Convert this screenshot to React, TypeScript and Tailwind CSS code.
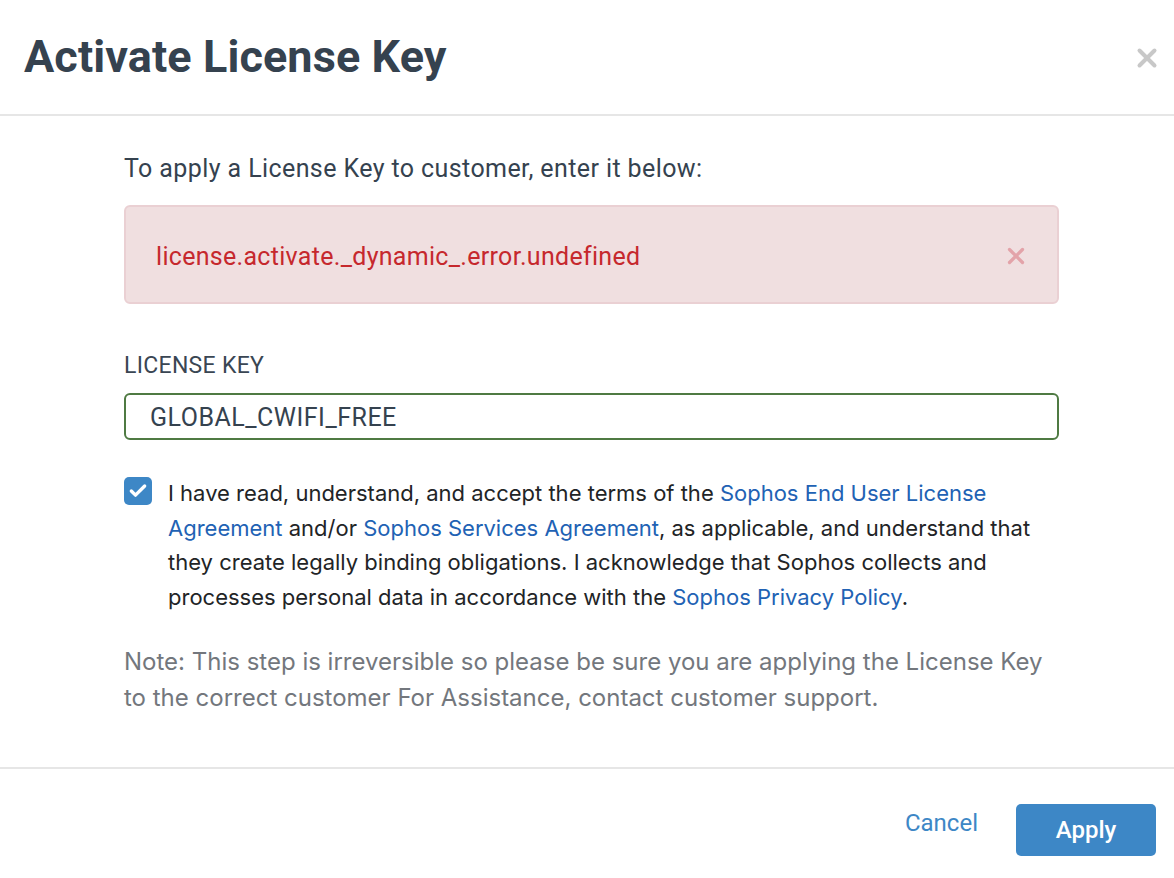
import { X, Check } from 'lucide-react';

const din = { fontFamily: 'Roboto, "Liberation Sans", sans-serif' };
const body = { fontFamily: 'Inter, "Noto Sans", sans-serif' };

export default function App() {
    return (
        <div className="flex h-[878px] w-[1174px] flex-col bg-white text-[#35424f]" style={din}>
            {/* Header */}
            <div className="flex h-[116px] items-center justify-between border-b-2 border-[#e6e6e6] pl-6 pr-[12px]">
                <h1 className="text-[45px] font-bold tracking-[0.1px] text-[#35424f]">Activate License Key</h1>
                <button className="mt-[2px] text-[#c8c8c8]">
                    <X size={30} strokeWidth={3.2} />
                </button>
            </div>

            {/* Body */}
            <div className="flex flex-1 flex-col pl-[124px] pr-[115px] pt-[36px]">
                <p className="text-[25px] leading-[34px] tracking-[0.4px]">To apply a License Key to customer, enter it below:</p>

                <div className="mt-[19px] flex h-[99px] items-center justify-between rounded-md border-2 border-[#ead0d3] bg-[#f0dfe0] pl-[30px] pr-[28px]">
                    <span className="pt-[4px] text-[25px] tracking-[0.3px] text-[#c6282d]">license.activate._dynamic_.error.undefined</span>
                    <X size={26} strokeWidth={3} className="mt-[2px] text-[#e3a3a9]" />
                </div>

                <label className="mt-[47px] text-[23px] leading-[30px] tracking-[0.3px] text-[#3a4653]">LICENSE KEY</label>
                <div className="mt-[12px] flex h-[47px] items-center rounded-md border-2 border-[#4f7a43] pl-[24px]">
                    <span className="pt-[2px] text-[25px] tracking-[0.5px] text-[#35424f]">GLOBAL_CWIFI_FREE</span>
                </div>

                <div className="mt-[36px] flex gap-4" style={body}>
                    <div className="mt-[1px] flex h-[28px] w-[28px] shrink-0 items-center justify-center rounded-[5px] bg-[#3d87c6]">
                        <Check size={20} strokeWidth={4} className="text-white" />
                    </div>
                    <p className="text-[22px] leading-[34.5px] text-[#222426]">
                        I have read, understand, and accept the terms of the{' '}
                        <a className="text-[#2162b4]">Sophos End User License Agreement</a> and/or{' '}
                        <a className="text-[#2162b4]">Sophos Services Agreement</a>, as applicable, and understand that
                        they create legally binding obligations. I acknowledge that Sophos collects and processes
                        personal data in accordance with the <a className="text-[#2162b4]">Sophos Privacy Policy</a>.
                    </p>
                </div>

                <p className="mt-[30px] text-[24px] leading-[36px] text-[#73777d]" style={body}>
                    Note: This step is irreversible so please be sure you are applying the License Key to the correct
                    customer For Assistance, contact customer support.
                </p>
            </div>

            {/* Footer */}
            <div className="flex h-[111px] items-center justify-end gap-[38px] border-t-2 border-[#e6e6e6] pr-[18px]">
                <button className="mb-[2px] text-[24px] text-[#3d87c6]">Cancel</button>
                <button className="mt-[12px] h-[52px] w-[140px] rounded-[5px] bg-[#3d87c6] text-[24px] font-medium text-white">
                    Apply
                </button>
            </div>
        </div>
    );
}
